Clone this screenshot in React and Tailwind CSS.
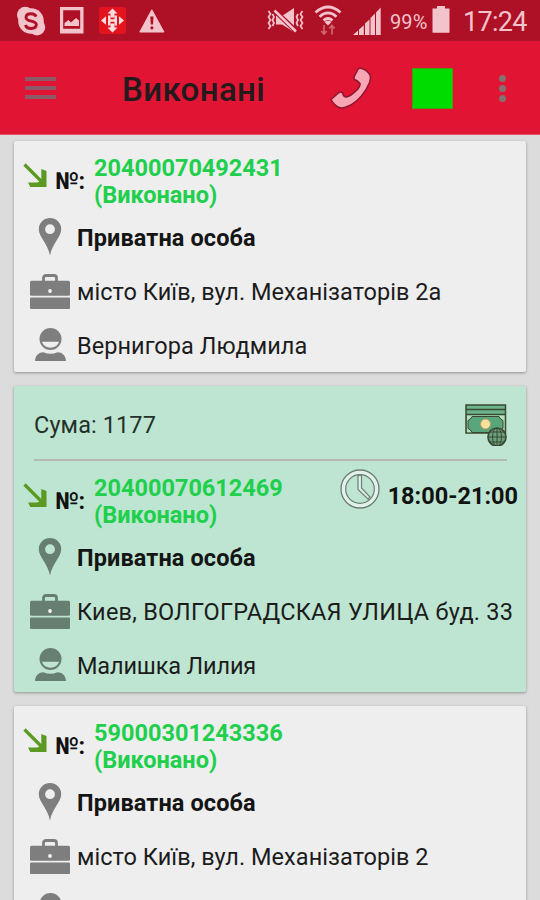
import React from "react";

const orders = [
  {
    number: "20400070492431",
    status: "(Виконано)",
    client: "Приватна особа",
    address: "місто Київ, вул. Механізаторів 2а",
    person: "Вернигора Людмила",
  },
  {
    number: "20400070612469",
    status: "(Виконано)",
    client: "Приватна особа",
    address: "Киев, ВОЛГОГРАДСКАЯ УЛИЦА буд. 33",
    person: "Малишка Лилия",
    sum: "Сума: 1177",
    time: "18:00-21:00",
  },
  {
    number: "59000301243336",
    status: "(Виконано)",
    client: "Приватна особа",
    address: "місто Київ, вул. Механізаторів 2",
    person: "",
  },
];

const SkypeIcon = () => (
  <svg className="w-[30px] h-[30px]" viewBox="0 0 30 30">
    <circle cx="15" cy="15" r="12.8" fill="#f3c3cb" />
    <circle cx="9.2" cy="9" r="8.2" fill="#f3c3cb" />
    <circle cx="21" cy="21.3" r="8.2" fill="#f3c3cb" />
    <path
      d="M20.2 10.6c-.8-2-2.700-2.900-5.200-2.900-2.900 0-5 1.400-5 3.700 0 4.900 10.300 2.400 10.300 7.200 0 2.500-2.200 3.900-5.200 3.900-2.900 0-5-1.200-5.700-3.500"
      fill="none"
      stroke="#ae1026"
      strokeWidth="2.900"
    />
  </svg>
);

const GalleryIcon = () => (
  <svg className="w-[24px] h-[27px]" viewBox="0 0 24 27">
    <path fillRule="evenodd" d="M0 0h23.500v26.500h-23.500zM3.200 3.200v18.600h17v-18.600z" fill="#f3c3cb" />
    <path d="M4.500 19v-3l4-3 2.500 2.500 5-4.500 3 2.500v5.500z" fill="#f3c3cb" />
  </svg>
);

const DeliveryIcon = () => (
  <svg className="w-[27px] h-[27px]" viewBox="0 0 27 27">
    <rect width="27" height="27" rx="3" fill="#e3141d" />
    <path
      d="M13.500 1.500l5 5h-3v4h-4v-4h-3zM13.500 25.500l5-5h-3v-4h-4v4h-3zM2 13.500l5-4.300v8.600zM25 13.500l-5-4.300v8.600z"
      fill="#fbdde0"
    />
    <path d="M9 8.500h2.500v3.700h4v-3.700h2.500v10h-2.500v-3.700h-4v3.700h-2.500z" fill="#fbdde0" />
  </svg>
);

const WarningIcon = () => (
  <svg className="w-[26px] h-[24px]" viewBox="0 0 26 24">
    <path d="M12.800.8l12.200 22.200h-24.200z" fill="#f3c3cb" stroke="#f3c3cb" strokeLinejoin="round" />
    <path d="M11.300 7.500h3.200l-.5 8h-2.200z" fill="#ae1026" />
    <circle cx="12.900" cy="18.800" r="1.600" fill="#ae1026" />
  </svg>
);

const MuteIcon = () => (
  <svg className="w-[38px] h-[25px]" viewBox="0 0 38 25" fill="none" stroke="#f3c3cb">
    <path d="M9 8h6l12-8v24l-12-7.500h-6z" fill="#f3c3cb" stroke="none" />
    <path d="M8 3l22 21" stroke="#ae1026" strokeWidth="5" />
    <path d="M7.500 2.500l21.500 21" strokeWidth="2.600" />
    <path d="M1.500 3l2 3-2 3 2 3-2 3 2 3-2 3M5.500 6l1.500 3-1.500 3 1.500 3-1.500 3" strokeWidth="1.700" />
    <path d="M35.500 3l-2 3 2 3-2 3 2 3-2 3 2 3M31 6l-1.500 3 1.500 3-1.500 3 1.500 3" strokeWidth="1.700" />
  </svg>
);

const WifiIcon = () => (
  <svg className="w-[28px] h-[30px]" viewBox="0 0 28 30" fill="none">
    <path d="M1.500 7.500q12.500-11 25 0M5.500 11.700q8.500-7.500 17 0M9.500 15.500q4.500-4 9 0" stroke="#f3c3cb" strokeWidth="2.700" />
    <path d="M10.500 17q3.500-2.500 7 0l-3.500 3.500z" fill="#f3c3cb" />
    <path d="M10 20v9M7.300 26l2.700 3 2.700-3M18 29.500v-9M15.300 23.500l2.700-3 2.700 3" stroke="#cf6674" strokeWidth="1.700" />
  </svg>
);

const SignalIcon = () => (
  <svg className="w-[28px] h-[28px]" viewBox="0 0 28 28">
    <path
      d="M0 28l5-4.500v4.500zM6 28v-5.500l4.800-4.300v9.800zM12 28v-11.500l4.500-4v15.500zM17.500 28v-17l4.500-4.500v21.500zM23 28v-22.500l4.700-5v27.500z"
      fill="#f3c3cb"
    />
  </svg>
);

const BatteryIcon = () => (
  <svg className="w-[18px] h-[27px]" viewBox="0 0 18 27">
    <path d="M5 0h8v2.500h4.500v24.200h-17v-24.200h4.500z" fill="#f3c3cb" />
  </svg>
);

const PhoneIcon = () => (
  <svg className="w-[42px] h-[42px]" viewBox="0 0 42 42">
    <path
      d="M28.500 1.500Q30 .8 32 1.500Q37 3 40 8Q41 11 39.500 15.500C36 25 28 34.500 18.500 39Q12 42 9 40.500Q4 38 1 32.500L9 25.500Q11 24.200 12.500 26Q13.500 30 16.500 30Q20.500 29.500 27.500 22.500Q30.500 19 30 16.500Q28 14 24.500 12.500Q23.500 11 24.500 9Z"
      fill="#f8a5b5"
      stroke="#8c1730"
      strokeWidth="1.500"
      strokeLinejoin="round"
    />
  </svg>
);

const ArrowIcon = () => (
  <svg className="w-[25px] h-[25px]" viewBox="0 0 25 25">
    <path d="M1.500 1.500l18.500 18.500" fill="none" stroke="#5a9a22" strokeWidth="3.200" />
    <path d="M18.300 6l5.200 2v16h-16.200l-2.300-4.500h9l4.300-1.500z" fill="#5a9a22" />
  </svg>
);

const PinIcon = () => (
  <svg className="w-[24px] h-[38px]" viewBox="0 0 24 38">
    <path
      fillRule="evenodd"
      d="M12 0a11.200 11.200 0 0 1 11.200 11.200c0 8-9 14-11.200 26.300c-2.200-12.300-11.200-18.300-11.200-26.300a11.200 11.200 0 0 1 11.200-11.200zM12 6.300a4.900 4.900 0 1 0 0 9.800a4.900 4.900 0 1 0 0-9.800z"
      fill="currentColor"
    />
  </svg>
);

const CaseIcon = () => (
  <svg className="w-[40px] h-[35px]" viewBox="0 0 40 35">
    <path d="M13.500 7.500v-3.500q0-2.500 2.500-2.500h8q2.500 0 2.500 2.500v3.500" fill="none" stroke="currentColor" strokeWidth="2.800" />
    <rect y="6.800" width="40" height="15" rx="1.500" fill="currentColor" />
    <rect y="23.400" width="40" height="11.600" rx="1" fill="currentColor" />
    <circle cx="20" cy="17" r="1.900" fill="#f2f2f2" />
  </svg>
);

const PersonIcon = () => (
  <svg className="w-[31px] h-[34px]" viewBox="0 0 31 34">
    <path
      fillRule="evenodd"
      d="M15.500 0a11 11 0 1 1 0 22a11 11 0 1 1 0-22zM7 13.800c2 7.800 15 7.800 17 0z"
      fill="currentColor"
    />
    <path d="M0 33c.5-6 4-8.500 8.500-8.700q7 3 14 0c4.500.2 8 2.700 8.500 8.700z" fill="currentColor" />
  </svg>
);

const ClockIcon = () => (
  <svg className="w-[40px] h-[40px]" viewBox="0 0 40 40" fill="none">
    <circle cx="20" cy="20" r="16.700" stroke="#e3f1ea" strokeWidth="4" />
    <circle cx="20" cy="20" r="19" stroke="#6b7f75" strokeWidth="1.300" />
    <circle cx="20" cy="20" r="14.300" stroke="#6b7f75" strokeWidth="1.200" />
    <path d="M18 6.500h3.500v12.500l8.500 9-1.800 2.200-10.200-9.700z" fill="#e3f1ea" stroke="#6b7f75" strokeWidth="1.200" />
  </svg>
);

const MoneyIcon = () => (
  <svg className="w-[42px] h-[42px]" viewBox="0 0 42 42" fill="none" stroke="#3c4931">
    <path d="M1 1h39.500v28h-39.500z" fill="#6bb38c" strokeWidth="1.500" />
    <path d="M1 5.500h39M1 10.500h39" strokeWidth="1.500" />
    <path d="M2 11.500h37.500v16.800h-37.500z" fill="#b9e0b9" stroke="none" />
    <path d="M7 12.500h27q1 3 4 4v8q-3 1-4 4h-27q-1-3-4-4v-8q3-1 4-4z" fill="#5aa67c" strokeWidth="1" />
    <circle cx="20.500" cy="20" r="5" fill="#f7e1a0" stroke="#b39d60" />
    <circle cx="32" cy="33" r="9" fill="#68a080" strokeWidth="1.700" />
    <path d="M32 24v18M23 33h18M25 28h14M25 38h14" strokeWidth="1" />
    <ellipse cx="32" cy="33" rx="4.500" ry="9" strokeWidth="1" />
  </svg>
);

const StatusBar = () => (
  <div className="flex h-[41px] bg-[#ae1026] text-[#f3c3cb]">
    <div className="flex items-center pl-[16px]">
      <SkypeIcon />
      <div className="ml-[14px]"><GalleryIcon /></div>
      <div className="ml-[15px]"><DeliveryIcon /></div>
      <div className="ml-[13px]"><WarningIcon /></div>
    </div>
    <div className="ml-auto flex items-center pr-[13px]">
      <MuteIcon />
      <div className="ml-[9px] -mt-[1px]"><WifiIcon /></div>
      <div className="ml-[11px]"><SignalIcon /></div>
      <div className="ml-[9px] w-[39px] text-[20px] tracking-[0.1px] whitespace-nowrap pt-[2px]">99%</div>
      <div className="ml-[3px] -mt-[2px]"><BatteryIcon /></div>
      <div className="ml-[13px] w-[64px] text-[27px] tracking-[-0.7px] leading-none whitespace-nowrap pt-[3px]">
        17:24
      </div>
    </div>
  </div>
);

const Toolbar = () => (
  <div className="flex items-center h-[94px] bg-[#e11433] border-b border-[#e0566a] pt-[1px]">
    <div className="ml-[25px] flex flex-col gap-[5px]">
      <div className="w-[31px] h-[4px] bg-[#8b5a66]" />
      <div className="w-[31px] h-[4px] bg-[#8b5a66]" />
      <div className="w-[31px] h-[4px] bg-[#8b5a66]" />
    </div>
    <div className="ml-[66px] w-[208px] text-[33px] tracking-[0.4px] font-medium text-[#231a1c] whitespace-nowrap pt-[3px]">
      Виконані
    </div>
    <PhoneIcon />
    <div className="ml-[40px] w-[41px] h-[41px] bg-[#00dc00] border-[1.5px] border-[#4a9a10]" />
    <div className="ml-[46px] flex flex-col gap-[3px]">
      <div className="w-[7px] h-[7px] rounded-full bg-[#82716f]" />
      <div className="w-[7px] h-[7px] rounded-full bg-[#82716f]" />
      <div className="w-[7px] h-[7px] rounded-full bg-[#82716f]" />
    </div>
  </div>
);

const InfoRow = ({ icon, children }) => (
  <div className="flex items-center h-[54px]">
    <div className="flex justify-center w-[40px] ml-[16px] pb-[2px]">{icon}</div>
    <div className="ml-[7px] pt-[2px] whitespace-nowrap">{children}</div>
  </div>
);

const OrderCard = ({ order }) => (
  <div
    className={
      order.sum
        ? "shrink-0 h-[306px] rounded-[2px] shadow-[0_1px_3px_rgba(0,0,0,0.35)] bg-[#bde5d1] text-[#677e73]"
        : "shrink-0 h-[231px] rounded-[2px] shadow-[0_1px_3px_rgba(0,0,0,0.35)] bg-[#eeeeee] text-[#7e7e7e]"
    }
  >
    {order.sum && (
      <div className="ml-[20px] mr-[19px] h-[75px] flex items-center justify-between border-b-2 border-[#b5b9b3] text-[#24302a]">
        <div className="pt-[6px] tracking-[0.1px]">{order.sum}</div>
        <div className="pt-[5px]"><MoneyIcon /></div>
      </div>
    )}
    <div className="flex pt-[14px] h-[70px]">
      <div className="ml-[9px] pt-[8px]"><ArrowIcon /></div>
      <div className="ml-[7px] w-[39px] leading-[52px] tracking-[-0.3px] font-bold text-[#111]">№:</div>
      <div className="font-bold leading-[27px] text-[#20cf4c]">
        <div>{order.number}</div>
        <div>{order.status}</div>
      </div>
      {order.time && (
        <div className="ml-auto mr-[8px] flex -mt-[6px]">
          <ClockIcon />
          <div className="ml-[8px] pt-[14px] leading-[27px] font-bold text-[#111]">{order.time}</div>
        </div>
      )}
    </div>
    <InfoRow icon={<PinIcon />}>
      <span className="font-bold tracking-[0.1px] text-[#151515]">{order.client}</span>
    </InfoRow>
    <InfoRow icon={<CaseIcon />}>
      <span className={order.sum ? "tracking-[0.24px] text-[#1c1c1c]" : "tracking-[0.05px] text-[#1c1c1c]"}>
        {order.address}
      </span>
    </InfoRow>
    <InfoRow icon={<PersonIcon />}>
      <span className={order.sum ? "tracking-[-0.15px] text-[#1c1c1c]" : "tracking-[0.05px] text-[#1c1c1c]"}>
        {order.person}
      </span>
    </InfoRow>
  </div>
);

const App = () => {
  return (
    <div className="w-[540px] h-[900px] overflow-hidden bg-[#dcdcdc] font-['Roboto',sans-serif]">
      <StatusBar />
      <Toolbar />
      <div className="flex flex-col gap-[14px] px-[14px] pt-[6px] h-[765px] overflow-hidden text-[23.5px]">
        {orders.map((order) => (
          <OrderCard key={order.number} order={order} />
        ))}
      </div>
    </div>
  );
};

export default App;
